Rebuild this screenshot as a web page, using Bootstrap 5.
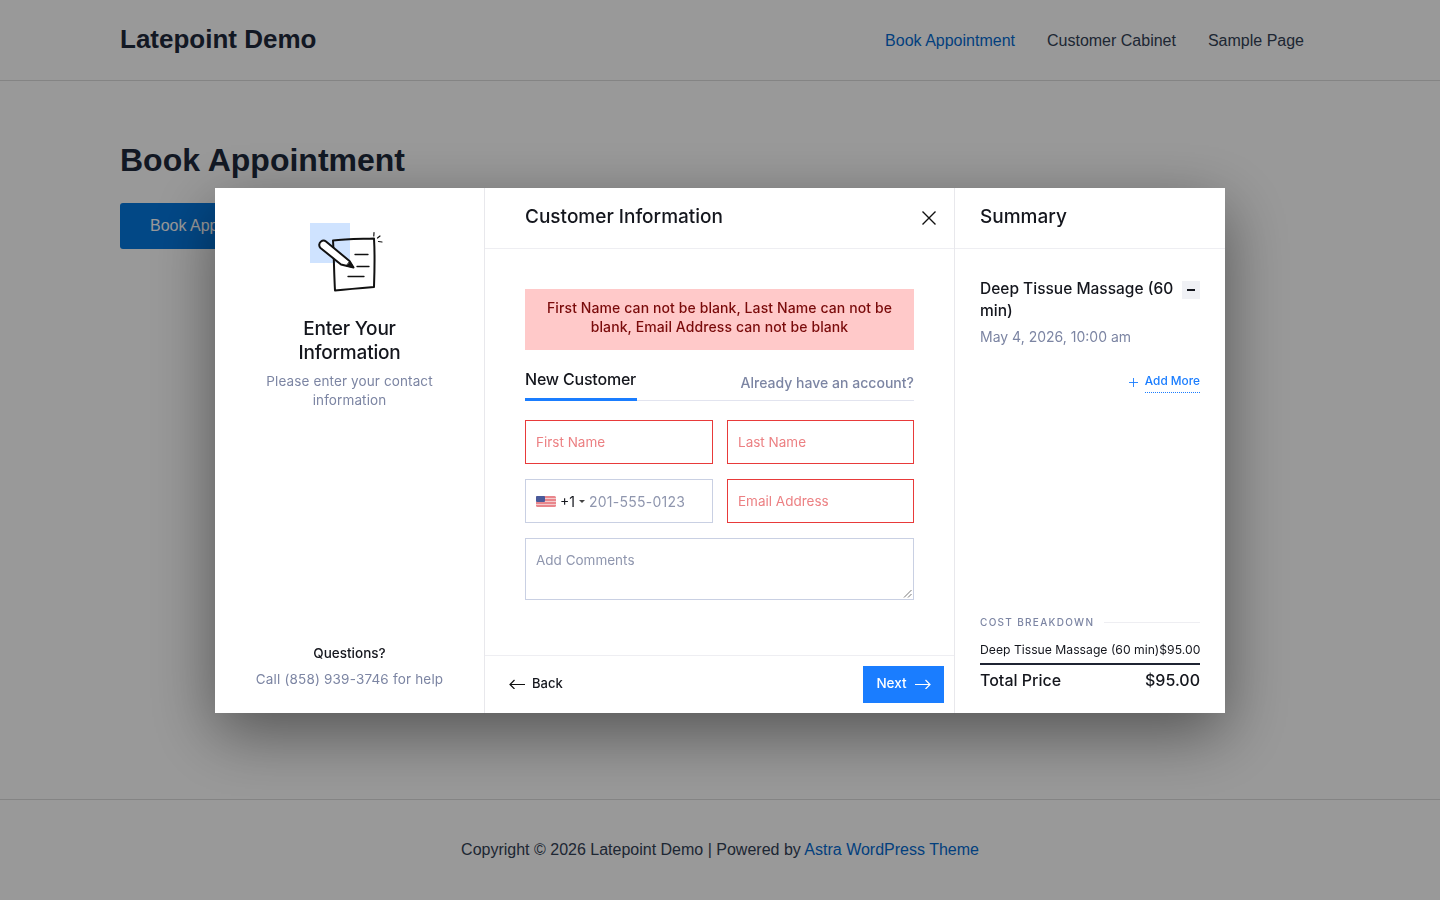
<!DOCTYPE html>
<html lang="en">
<head>
    <meta charset="UTF-8">
    <meta name="viewport" content="width=device-width, initial-scale=1.0">
    <title>Book Appointment</title>
    <link href="https://cdn.jsdelivr.net/npm/bootstrap@5.3.0/dist/css/bootstrap.min.css" rel="stylesheet">
    <style>
        html, body { height: 100%; }
        body {
            font-family: "Liberation Sans", Arial, sans-serif;
            font-size: 16px;
            color: #1f2433;
            background: #fff;
            overflow: hidden;
        }
        a { text-decoration: none; }
        .site { height: 900px; }
        .site-header { height: 81px; border-bottom: 1px solid #dcdcdc; padding: 0 120px; }
        .site-title { font-size: 26px; font-weight: 700; color: #1e293b; padding-bottom: 2px; }
        .site-nav { padding-top: 1px; }
        .site-nav a { color: #334155; padding: 0 16px; }
        .site-nav a.active { color: #046bd2; }
        .site-main { padding: 60px 120px 0; height: 718px; }
        .site-main h1 { font-size: 32px; font-weight: 700; color: #1e293b; line-height: 38px; margin-bottom: 24px; }
        .btn-book { background: #0478e0; color: #fff; border-radius: 3px; height: 46px; padding: 0 30px; font-size: 16px; line-height: 46px; display: inline-block; }
        .site-footer { border-top: 1px solid #dcdcdc; height: 101px; color: #334155; }
        .site-footer a { color: #046bd2; }

        .backdrop { position: fixed; inset: 0; background: rgba(0, 0, 0, .4); }
        .booking {
            width: 1010px;
            height: 525px;
            margin-top: 1px;
            background: #fff;
            box-shadow: 0 20px 60px rgba(0, 0, 0, .45);
            font-family: Inter, "Noto Sans", sans-serif;
            color: #14161d;
        }
        .pane-left { width: 270px; border-right: 1px solid #e8e8ec; padding: 35px 30px 24px; }
        .pane-mid { width: 470px; border-right: 1px solid #e8e8ec; }
        .pane-right { width: 270px; }
        .pane-head { height: 61px; border-bottom: 1px solid #eeeef2; font-size: 19px; font-weight: 500; line-height: 57px; }
        .step-icon { width: 80px; height: 70px; margin: 0 auto; }
        .step-title { font-size: 19px; line-height: 24px; font-weight: 500; margin-top: 24px; letter-spacing: -.2px; padding: 0 25px; }
        .step-desc { font-size: 13.5px; line-height: 19px; color: #7c85a3; margin-top: 7px; letter-spacing: .12px; }
        .help-title { font-size: 13.5px; font-weight: 500; margin-top: 1px; }
        .help-text { font-size: 13.5px; color: #7c85a3; margin-top: 6px; letter-spacing: .18px; }

        .mid-body { padding: 40px 40px 0; }
        .close-x { position: absolute; right: 17px; top: 22px; width: 16px; height: 16px; }
        .alert-err { background: #ffc9c9; color: #7a0b0b; font-size: 14px; font-weight: 500; line-height: 19px; padding: 9px 16px 12px; text-align: center; height: 61px; letter-spacing: .1px; }
        .tabs { height: 40px; border-bottom: 1px solid #e2e4ef; margin-top: 11px; margin-bottom: 19px; }
        .tab-active { font-size: 16px; font-weight: 500; height: 40px; line-height: 37px; border-bottom: 3px solid #1a7dff; width: 112px; white-space: nowrap; letter-spacing: -.2px; }
        .tab-link { font-size: 14px; font-weight: 500; color: #7c85a3; line-height: 43px; letter-spacing: .02px; }
        .fields { display: grid; grid-template-columns: 188px 187px; gap: 15px 14px; }
        .field { height: 44px; border: 1px solid #c9d0e3; font-size: 13.5px; color: #8f96ae; padding: 0 10px; display: flex; align-items: center; }
        .field.bad { border-color: #e83a3a; color: #ec8083; }
        .field.wide { grid-column: span 2; height: 62px; align-items: flex-start; padding-top: 11px; position: relative; }
        .grip { position: absolute; right: 1px; bottom: 1px; width: 9px; height: 9px; }
        .dial { color: #14161d; margin: 0 4px 0 4px; font-size: 14px; }
        .phone { font-size: 14px; letter-spacing: .25px; }
        .caret-down { width: 0; height: 0; border: 3px solid transparent; border-top: 3px solid #444; margin: 3px 4px 0 0; }

        .mid-foot { height: 58px; border-top: 1px solid #eeeef2; padding: 0 10px 0 24px; }
        .back-link { font-size: 13px; font-weight: 500; color: #14161d; gap: 7px; }
        .back-link span, .next-btn span, .mid-foot svg { margin-top: -2px; }
        .next-btn { background: #1a7dff; color: #fff; font-size: 13.5px; font-weight: 500; width: 81px; height: 37px; border-radius: 0; border: 0; padding: 0; }

        .sum-body { padding: 29px 25px 0; }
        .sum-name { font-size: 15.5px; font-weight: 500; line-height: 22px; }
        .remove-btn { width: 18px; height: 18px; background: #f0f1f5; flex: none; margin-top: 3px; }
        .remove-btn span { width: 8px; height: 2px; background: #14161d; }
        .sum-date { font-size: 14px; color: #7c85a3; margin-top: 4px; }
        .add-more { margin-top: 26px; font-size: 11.8px; font-weight: 500; color: #1a7dff; gap: 7px; }
        .add-more span { border-bottom: 1px dotted #1a7dff; padding-bottom: 1px; }
        .cost { padding: 0 25px 21px; }
        .cost-label { font-size: 10px; letter-spacing: 1.3px; font-weight: 500; color: #7c85a3; white-space: nowrap; }
        .cost-rule { height: 1px; background: #eeeef2; }
        .cost-row { font-size: 12.2px; margin-top: 11px; white-space: nowrap; padding-bottom: 4px; border-bottom: 2px solid #1f2433; }
        .cost-total { font-size: 16px; font-weight: 500; margin-top: 3px; }
    </style>
</head>
<body>

<div class="site d-flex flex-column">
    <header class="site-header d-flex align-items-center justify-content-between">
        <div class="site-title">Latepoint Demo</div>
        <nav class="site-nav d-flex">
            <a class="active" href="#">Book Appointment</a>
            <a href="#">Customer Cabinet</a>
            <a href="#">Sample Page</a>
        </nav>
    </header>
    <main class="site-main">
        <h1>Book Appointment</h1>
        <a class="btn-book" href="#">Book Appointment</a>
    </main>
    <footer class="site-footer d-flex align-items-center justify-content-center">
        <div>Copyright © 2026 Latepoint Demo | Powered by <a href="#">Astra WordPress Theme</a></div>
    </footer>
</div>

<div class="backdrop d-flex align-items-center justify-content-center">
    <div class="booking d-flex">

        <!-- Step info -->
        <div class="pane-left d-flex flex-column text-center">
            <div class="step-icon">
                <svg width="80" height="70" viewBox="0 0 80 70" fill="none" stroke="#111" stroke-linecap="round" stroke-linejoin="round">
                    <rect x="0" y="0" width="40" height="40" fill="#cfe3ff" stroke="none"/>
                    <path d="M23 17.500C35 16 50 16 64 15.500C65 32 64.500 50 64 64C52 65 40 66 25 67.500C24 50 24 34 23 17.500Z" fill="none" stroke-width="2"/>
                    <path d="M11 18.500C9 20 8.500 23 10.500 25L31 41.500L43.500 44.500L39.500 38L16 18.500C14.500 17.300 12.500 17.300 11 18.500Z" fill="#fff" stroke-width="2"/>
                    <path d="M36.500 43L43.500 44.500L40 38.500Z" fill="#111" stroke-width="1"/>
                    <path d="M45 31.500H58M47 43.500H59M38 53.500H54" stroke-width="1.300"/>
                    <path d="M64 9.500L63.800 13M70 13L67.500 15M72 19L68.500 18.500" stroke-width="1.200"/>
                </svg>
            </div>
            <div class="step-title">Enter Your Information</div>
            <div class="step-desc">Please enter your contact information</div>
            <div class="mt-auto">
                <div class="help-title">Questions?</div>
                <div class="help-text text-nowrap">Call (858) 939-3746 for help</div>
            </div>
        </div>

        <!-- Customer form -->
        <div class="pane-mid d-flex flex-column position-relative">
            <div class="pane-head" style="padding-left: 40px">Customer Information</div>
            <svg class="close-x" viewBox="0 0 16 16" fill="none" stroke="#111" stroke-width="1.400">
                <path d="M1.500 1.500L14.500 14.500M14.500 1.500L1.500 14.500"/>
            </svg>
            <div class="mid-body flex-grow-1">
                <div class="alert-err">First Name can not be blank, Last Name can not be blank, Email Address can not be blank</div>
                <div class="tabs d-flex justify-content-between">
                    <div class="tab-active">New Customer</div>
                    <div class="tab-link">Already have an account?</div>
                </div>
                <div class="fields">
                    <div class="field bad">First Name</div>
                    <div class="field bad">Last Name</div>
                    <div class="field">
                        <svg width="20" height="11" viewBox="0 0 20 11">
                            <rect width="20" height="11" rx="1.500" fill="#e9868c"/>
                            <path d="M0 2.500H20M0 5.500H20M0 8.500H20" stroke="#f4d3d5" stroke-width=".9"/>
                            <rect width="9" height="6" rx="1" fill="#4a5a9a"/>
                        </svg>
                        <span class="dial">+1</span>
                        <span class="caret-down"></span>
                        <span class="phone">201-555-0123</span>
                    </div>
                    <div class="field bad">Email Address</div>
                    <div class="field wide">Add Comments
                        <svg class="grip" viewBox="0 0 9 9" stroke="#555" stroke-width=".8"><path d="M1 8.500L8.500 1M5 8.500L8.500 5"/></svg>
                    </div>
                </div>
            </div>
            <div class="mid-foot d-flex align-items-center justify-content-between">
                <a class="back-link d-flex align-items-center" href="#">
                    <svg width="16" height="10" viewBox="0 0 16 10" fill="none" stroke="#111" stroke-width="1.200"><path d="M16 5.500H1M5.500 1L1 5.500L5.500 10"/></svg>
                    <span>Back</span>
                </a>
                <button class="next-btn d-flex align-items-center justify-content-center gap-2">
                    <span>Next</span>
                    <svg width="16" height="10" viewBox="0 0 16 10" fill="none" stroke="#fff" stroke-width="1.200"><path d="M0 5.500H15M10.500 1L15 5.500L10.500 10"/></svg>
                </button>
            </div>
        </div>

        <!-- Summary -->
        <div class="pane-right d-flex flex-column">
            <div class="pane-head" style="padding-left: 25px">Summary</div>
            <div class="sum-body flex-grow-1">
                <div class="d-flex gap-2 align-items-start justify-content-between">
                    <div class="sum-name">Deep Tissue Massage (60 min)</div>
                    <div class="remove-btn d-flex align-items-center justify-content-center"><span></span></div>
                </div>
                <div class="sum-date">May 4, 2026, 10:00 am</div>
                <div class="add-more d-flex align-items-center justify-content-end">
                    <svg width="9" height="9" viewBox="0 0 10 10" stroke="#1a7dff" stroke-width="1"><path d="M5 0V10M0 5H10"/></svg>
                    <span>Add More</span>
                </div>
            </div>
            <div class="cost">
                <div class="d-flex align-items-center" style="gap: 10px">
                    <div class="cost-label">COST BREAKDOWN</div>
                    <div class="cost-rule flex-grow-1"></div>
                </div>
                <div class="cost-row d-flex justify-content-between">
                    <span>Deep Tissue Massage (60 min)</span><span>$95.00</span>
                </div>
                <div class="cost-total d-flex justify-content-between">
                    <span>Total Price</span><span>$95.00</span>
                </div>
            </div>
        </div>
    </div>
</div>

<script src="https://cdn.jsdelivr.net/npm/bootstrap@5.3.0/dist/js/bootstrap.bundle.min.js"></script>
</body>
</html>
